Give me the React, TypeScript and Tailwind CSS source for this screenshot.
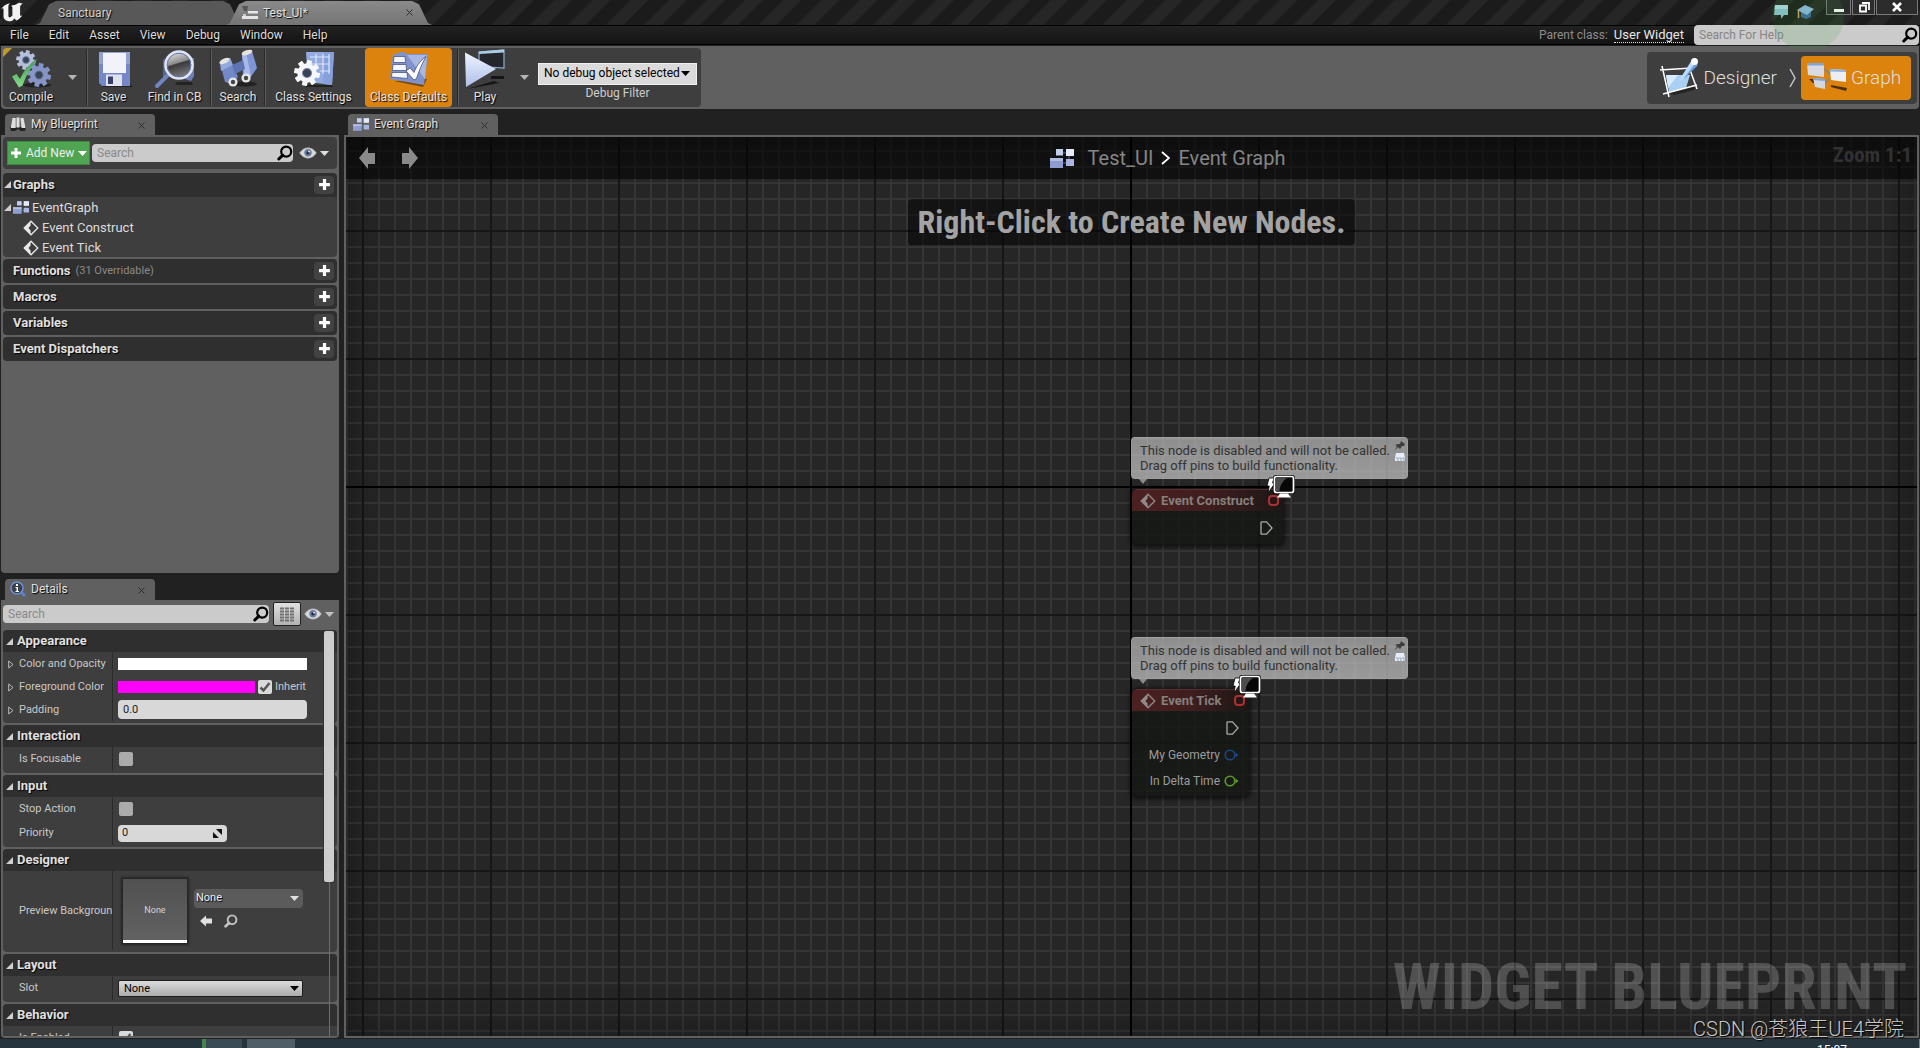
import React from "react";

const shadow = "[text-shadow:1px_1px_1px_#000]";

function UnrealLogo() {
  return (
    <svg viewBox="0 0 24 20" className="mt-[2px] h-5 w-6 shrink-0" fill="#f2f2f2" aria-hidden="true">
      <path d="M.8 8C2.500 4.200 5.800 1.900 10.200 1.200 8.800 2.300 8.400 3.200 8.400 4.600V14c0 1.500 1.400 1.700 2.300 1l1.700-1.400V5.400c0-1-.6-1.400-1.600-1.500C13 3 15.600 3 17.600 1.500L19 .8c2 .4 3 .8 4 .5-1.700 1.200-2.900 2.200-2.900 4v7.500c0 1.400 1 1.200 2.400.5-1.700 2.600-4 4.300-6.100 5.200l-1.900-1.900-2.600 2.500c-3.300.5-8.100-.5-8.400-4.600V7c0-1.300-1.200-.9-2.700 1Z" />
    </svg>
  );
}

function Down({ color = "#e0e0e0", w = 9 }: { color?: string; w?: number }) {
  return (
    <svg width={w} height="5" viewBox="0 0 9 5" className="shrink-0" aria-hidden="true">
      <path d="M0 0h9L4.500 5Z" fill={color} />
    </svg>
  );
}

function Magnifier({ className, color = "#000" }: { className: string; color?: string }) {
  return (
    <svg viewBox="0 0 16 16" className={className} fill="none" stroke={color} aria-hidden="true">
      <circle cx="9.200" cy="6.600" r="5" strokeWidth="2.200" />
      <path d="M5.800 10.200 1.800 14" strokeWidth="3" strokeLinecap="round" />
    </svg>
  );
}

function Eye() {
  return (
    <svg viewBox="0 0 18 12" className="h-3 w-[18px] shrink-0" aria-hidden="true">
      <path d="M.5 6C3.500 2 6 .8 9 .8S14.500 2 17.500 6C14.500 10 12 11.200 9 11.200S3.500 10 .5 6Z" fill="#d9d9d9" stroke="#8d8d8d" strokeWidth=".6" />
      <circle cx="9" cy="5.800" r="3.700" fill="#6b7fa0" />
      <circle cx="9" cy="5.800" r="1.700" fill="#1f2a40" />
      <circle cx="10" cy="4.600" r=".9" fill="#fff" />
    </svg>
  );
}

function GraphIcon({ className }: { className: string }) {
  return (
    <svg viewBox="0 0 24 19" className={className} aria-hidden="true">
      <path d="M9 4h8M19 5v9M9 14h8" stroke="#5f6a8c" strokeWidth="1" />
      <rect x="6" y="0" width="7" height="6.500" fill="#c5cdec" />
      <rect x="16" y="0" width="8" height="7" fill="#e6ebfa" />
      <rect x="0" y="9" width="13" height="10" fill="#8e9cd0" />
      <rect x="0" y="9" width="13" height="3" fill="#b1bce2" />
      <rect x="16" y="10" width="8" height="7" fill="#a9b6e0" />
    </svg>
  );
}

function Gear({ cx, cy, s, fill }: { cx: number; cy: number; s: number; fill: string }) {
  return (
    <g transform={`translate(${cx} ${cy}) scale(${s})`}>
      {[0, 45, 90, 135].map((a) => (
        <rect key={a} x="-2.400" y="-12" width="4.800" height="24" rx=".6" fill={fill} transform={`rotate(${a + 12})`} />
      ))}
      <circle r="6.500" fill="none" stroke={fill} strokeWidth="5" />
      <circle r="4.200" fill="#3a4258" stroke="#7c89ad" strokeWidth="1" />
    </g>
  );
}

function CompileIcon() {
  return (
    <svg viewBox="0 0 40 40" className="h-10 w-10" aria-hidden="true">
      <defs>
        <linearGradient id="chk" x1="0" y1="0" x2="0" y2="1"><stop offset="0" stopColor="#3c9a4c" /><stop offset="1" stopColor="#86dc8c" /></linearGradient>
      </defs>
      <ellipse cx="26" cy="36" rx="14" ry="2.500" fill="#222" />
      <Gear cx={15} cy={11} s={0.82} fill="#b4bfdc" />
      <Gear cx={28} cy={26} s={1} fill="#8595c8" />
      <path d="M1 27.500 5.500 25l3.500 5C13 21.500 18 15 26.500 9.500 19.500 18.500 15 27 11.500 36.500L8 38.500Z" fill="url(#chk)" />
    </svg>
  );
}

function SaveIcon() {
  return (
    <svg viewBox="0 0 40 40" className="h-10 w-10" aria-hidden="true">
      <path d="M6 35h30l3 3H9Z" fill="#222" />
      <path d="M5 3h31v34H8l-3-3Z" fill="#7688c8" />
      <path d="M5 3h31v12H5Z" fill="#93a2d6" />
      <path d="M9 4h23v20H9Z" fill="#f1f3f8" />
      <path d="M12 25.500h16V37H12Z" fill="#dfe3ee" />
      <path d="M14 27.500h5V35h-5Z" fill="#35406c" />
    </svg>
  );
}

function FindIcon() {
  return (
    <svg viewBox="0 0 40 40" className="h-10 w-10" aria-hidden="true">
      <defs>
        <linearGradient id="lens" x1="0" y1="0" x2=".3" y2="1"><stop offset="0" stopColor="#f4f4f4" /><stop offset=".5" stopColor="#8c8c8c" /><stop offset=".55" stopColor="#3a3a3a" /><stop offset="1" stopColor="#777" /></linearGradient>
      </defs>
      <path d="M8 10h7v18H8Z" fill="#54659b" />
      <path d="M33 9h6v18l-3 5-6-2Z" fill="#6d7fb5" />
      <path d="M22 33h15l1 3H20Z" fill="#222" />
      <path d="M12 27 2 37" stroke="#7085be" strokeWidth="4" strokeLinecap="round" />
      <circle cx="24" cy="16" r="13.500" fill="url(#lens)" stroke="#dfe5f5" strokeWidth="2.600" />
      <circle cx="24" cy="16" r="11.800" fill="none" stroke="#6678ad" strokeWidth="1" />
    </svg>
  );
}

function BinocularsIcon() {
  return (
    <svg viewBox="0 0 40 40" className="h-10 w-10" aria-hidden="true">
      <ellipse cx="27" cy="35" rx="12" ry="2.500" fill="#222" />
      <path d="m2 14 10-5 8 19-6 7-7-2Z" fill="#7188c9" />
      <path d="m2 14 10-5 3 7-12 6Z" fill="#93a8dd" />
      <path d="M24 5 34 2l5 17-7 10-7 1Z" fill="#7f96d6" />
      <path d="m24 5 4-2 5 24-6 3Z" fill="#a9bae8" />
      <path d="M14 16 25 11l2 9-10 5Z" fill="#5d73b2" />
      <ellipse cx="6.500" cy="12" rx="5.500" ry="2.400" transform="rotate(-24 6.500 12)" fill="#e3e3e0" />
      <ellipse cx="29" cy="3.500" rx="5.500" ry="2.400" transform="rotate(-18 29 3.500)" fill="#e8e4d8" />
      <circle cx="15" cy="33" r="4.600" fill="#e6e6e6" /><circle cx="15" cy="33" r="2.200" fill="#444" />
      <circle cx="28" cy="29" r="4.600" fill="#e6e6e6" /><circle cx="28" cy="29" r="2.200" fill="#444" />
    </svg>
  );
}

function SettingsIcon() {
  return (
    <svg viewBox="0 0 40 40" className="h-10 w-10" aria-hidden="true">
      <path d="M12 36h26l1 2H12Z" fill="#222" />
      <path d="M12 3h28l-2 33-24-3Z" fill="#93abe0" />
      <path d="M30 3h10l-2 33-9-1Z" fill="#86a0da" />
      <path d="M16 8h20M16 15h20M26 22h10M22 5v10M29 5v20M35 5v20" stroke="#dbe5fb" strokeWidth="1.200" fill="none" />
      <Gear cx={13} cy={24} s={1.08} fill="#f6f7fa" />
    </svg>
  );
}

function DefaultsIcon() {
  return (
    <svg viewBox="0 0 40 40" className="h-10 w-10" aria-hidden="true">
      <path d="M5 32 34 38l4-8Z" fill="#7a4a08" />
      <path d="M4 5h5l1-2h6l1 2h22l-4 31L1 30Z" fill="#7f92cc" />
      <path d="M18 6h20L36 30Z" fill="#a9b7e2" />
      <path d="M5 7.500h11l.6 6H4.500ZM4 15.500h13l.6 6H3.500ZM3 23.500h15l.6 6L2.500 28Z" fill="#f4f6fb" stroke="#3c4a76" strokeWidth=".7" />
      <path d="m17 22 4-3 4 4.500C27.500 17 31 12 37 7.500 33 14.500 30 22 27.500 29.500L25 31Z" fill="#fff" stroke="#33406a" strokeWidth=".7" />
    </svg>
  );
}

function PlayIcon() {
  return (
    <svg viewBox="0 0 40 40" className="h-10 w-10" aria-hidden="true">
      <defs>
        <linearGradient id="play" x1="0" y1="0" x2="0" y2="1"><stop offset="0" stopColor="#eef4ff" /><stop offset="1" stopColor="#aebfe8" /></linearGradient>
      </defs>
      <path d="m2 40 32-6-5-2ZM26 27h13v3H26Z" fill="#151515" />
      <path d="M14 3 39 1v18l-15-1-10-6Z" fill="#23262c" stroke="#8fb0cf" strokeWidth="1.200" />
      <path d="M14 2.500 39 .5v3L14 5Z" fill="#a9cbe6" />
      <path d="M0 3.500 31 20 1 38Z" fill="url(#play)" />
    </svg>
  );
}

function DesignerIcon() {
  return (
    <svg viewBox="0 0 42 40" className="h-10 w-[42px] shrink-0" aria-hidden="true">
      <path d="m9 34 30-7-3 5-20 5Z" fill="#242424" />
      <path d="M8 17h24l-4 13-17 4Z" fill="#a9cff3" />
      <path d="M8 17h12L10 30Z" fill="#d8ecff" />
      <path d="M2 12 34 10M4 8l7 31M31 9l8 22M5 36l34-9" stroke="#fff" strokeWidth="1.500" fill="none" />
      <path d="M22 22 33 3.500l7 3.500L27 20Z" fill="#6c9fe0" />
      <path d="m33 3.500 4 2-12 16-4 1Z" fill="#bcdcff" />
      <circle cx="36.500" cy="3.500" r="3.500" fill="#fff" />
    </svg>
  );
}

function ModeGraphIcon() {
  return (
    <svg viewBox="0 0 40 32" className="h-8 w-10 shrink-0" aria-hidden="true">
      <path d="M2 17h5l2 4H6ZM24 23l16 3-1 3-15-4Z" fill="#4d2f06" />
      <path d="m16 6 8 7M22 17l-5 5" stroke="#7d8394" strokeWidth="1.500" />
      <path d="M0 1h17v14L1 13Z" fill="#d7dae2" /><path d="M0 1h17v2.500H0Z" fill="#7fa5da" />
      <path d="m23 7 16 1v12l-15-2Z" fill="#eceef3" /><path d="m23 7 16 1v2L23 9.500Z" fill="#8fb2e0" />
      <path d="m6 16 12 1v10L8 25Z" fill="#d3d7e0" /><path d="m6 16 12 1v2L6 18Z" fill="#7fa5da" />
    </svg>
  );
}

function ToolButton({ label, icon, className = "" }: { label: string; icon: React.ReactNode; className?: string }) {
  return (
    <button className={`flex flex-col items-center pt-px text-xs leading-4 text-[#e2e2e2] ${shadow} ${className}`}>
      {icon}
      <span className="whitespace-nowrap">{label}</span>
    </button>
  );
}

const Separator = () => <div className="my-px w-[2px] shrink-0 border-l border-[#2a2a2a] bg-[#5e5e5e]" />;

function TitleBar() {
  return (
    <header className="flex h-[25px] shrink-0 bg-[repeating-linear-gradient(135deg,#1b1b1b_0px,#1b1b1b_13px,#262626_15px,#262626_26px,#1b1b1b_27px)]">
      <div className="flex w-9"><UnrealLogo /></div>
      <button className={`mt-px -mr-[14px] w-[207px] bg-[#585858] pb-px pl-[22px] text-left text-xs text-[#d0d0d0] [clip-path:polygon(0_100%,4px_92%,13px_14%,20px_0,calc(100%-20px)_0,calc(100%-13px)_14%,calc(100%-4px)_92%,100%_100%)] ${shadow}`}>Sanctuary</button>
      <div className={`relative z-10 mt-px -ml-[3px] flex w-[206px] items-center bg-linear-to-b from-[#8a8a8a] to-[#757575] pb-px pl-4 text-xs text-[#e0e0e0] [clip-path:polygon(0_100%,4px_92%,13px_14%,20px_0,calc(100%-20px)_0,calc(100%-13px)_14%,calc(100%-4px)_92%,100%_100%)] ${shadow}`}>
        <svg viewBox="0 0 16 14" className="mr-[5px] h-[14px] w-4" aria-hidden="true">
          <path d="M0 0h6l-1 5H2Z" fill="#555" /><path d="M6 5h10v2.500H6ZM0 10h16v3H0Z" fill="#e6e6e6" /><path d="M1 8h3v2H1Z" fill="#c9c9c9" />
        </svg>
        <span>Test_UI*</span>
        <button aria-label="Close Test_UI" className="mr-[19px] ml-auto"><CloseX /></button>
      </div>
      <div className="mr-px ml-auto flex">
        <svg viewBox="0 0 16 16" className="mt-1 h-4 w-4" aria-hidden="true"><path d="M2 1h13v10h-4l-3 4v-4H1Z" fill="#8cc7d6" /><path d="M2 1h13v4H1.600Z" fill="#b4dfe8" /></svg>
        <svg viewBox="0 0 17 16" className="mt-1 mr-3 ml-2 h-4 w-[17px]" aria-hidden="true"><path d="M4 8h10v5l-5 2-5-2Z" fill="#3f6aa0" /><path d="M0 6 8 1l9 4-7 6Z" fill="#8fbbe8" /><path d="M1.500 6v8" stroke="#d9a566" strokeWidth="1.500" /></svg>
        <WinButton label="Minimize" width="w-[25px]"><path d="M1 8h10v3H1Z" fill="#fff" /></WinButton>
        <WinButton label="Restore" width="w-[23px]"><path d="M4 2h7v7M2 4.500h6v6H2Z" fill="none" stroke="#fff" strokeWidth="1.800" /></WinButton>
        <WinButton label="Close" width="w-[42px]"><path d="m2 2 8 8M10 2l-8 8" stroke="#fff" strokeWidth="2.600" /></WinButton>
      </div>
    </header>
  );
}

function WinButton({ label, width, children }: { label: string; width: string; children: React.ReactNode }) {
  return (
    <button aria-label={label} className={`mr-px flex h-[15px] items-center justify-center border border-t-0 border-[#7a7a7a] bg-[#2c2c2c] ${width}`}>
      <svg viewBox="0 0 12 12" className="h-3 w-3">{children}</svg>
    </button>
  );
}

function CloseX() {
  return (
    <svg viewBox="0 0 7 7" className="h-[7px] w-[7px]" stroke="#2c2c2c" strokeWidth="1" aria-hidden="true"><path d="m.5.5 6 6M6.500.5l-6 6" /></svg>
  );
}

function MenuBar() {
  return (
    <nav className="flex h-5 shrink-0 items-stretch border-y border-black bg-linear-to-b from-[#222] to-[#141414] text-xs text-[#dcdcdc]">
      <div className="flex items-center gap-5 pl-[10px]">
        {["File", "Edit", "Asset", "View", "Debug", "Window", "Help"].map((m) => (
          <button key={m} className={shadow}>{m}</button>
        ))}
      </div>
      <div className="ml-auto flex items-center">
        <span className="text-[#8c8c8c]">Parent class:</span>
        <a href="#user-widget" className="mr-[10px] ml-[6px] border-b border-dotted border-[#ddd] text-[13px] leading-[15px] text-[#e8e8e8]">User Widget</a>
        <label className="mr-px flex h-5 w-[225px] items-center rounded-sm bg-[#cbcbcb] pl-[5px]">
          <input aria-label="Search For Help" placeholder="Search For Help" className="min-w-0 flex-1 outline-none placeholder:text-[#858585]" />
          <Magnifier className="mr-px h-4 w-4" />
        </label>
      </div>
    </nav>
  );
}

function Toolbar() {
  return (
    <div className="mx-px mt-px flex h-[63px] shrink-0 items-stretch justify-between rounded-b bg-[#606060] py-[2px] pl-[2px]">
      <div className="flex rounded bg-[#3e3e3e] bg-linear-[135deg,#c19a2e_6px,transparent_7px]">
        <ToolButton label="Compile" icon={<CompileIcon />} className="w-[56px]" />
        <button aria-label="Compile options" className="flex w-[27px] items-center justify-center"><Down color="#b5b5b5" /></button>
        <Separator />
        <ToolButton label="Save" icon={<SaveIcon />} className="w-[51px]" />
        <ToolButton label="Find in CB" icon={<FindIcon />} className="w-[71px]" />
        <Separator />
        <ToolButton label="Search" icon={<BinocularsIcon />} className="w-[52px]" />
        <Separator />
        <ToolButton label="Class Settings" icon={<SettingsIcon />} className="mr-1 w-[95px]" />
        <ToolButton label="Class Defaults" icon={<DefaultsIcon />} className="mr-[5px] w-[87px] rounded-sm bg-[#db830c]" />
        <Separator />
        <ToolButton label="Play" icon={<PlayIcon />} className="w-[52px]" />
        <button aria-label="Play options" className="flex w-[27px] items-center justify-center"><Down color="#b5b5b5" /></button>
        <div className="mr-1 flex flex-col items-center pt-[15px]">
          <div className="relative">
            <select aria-label="Debug Filter" className="block h-[22px] w-[159px] appearance-none border border-[#efefef] bg-[#dadada] pb-[2px] pl-[5px] text-xs text-black">
              <option>No debug object selected</option>
            </select>
            <div className="pointer-events-none absolute top-2 right-[7px]"><Down color="#000" /></div>
          </div>
          <span className="text-xs leading-4 text-[#cdcdcd]">Debug Filter</span>
        </div>
      </div>
      <div className="mt-1 mr-[2px] mb-[3px] flex items-center rounded bg-[#3e3e3e] pr-[6px] pl-[11px] text-[19px] font-light text-[#dedede]">
        <button className="flex items-center gap-1"><DesignerIcon />Designer</button>
        <svg viewBox="0 0 8 20" className="mr-1 ml-3 h-5 w-2" fill="none" stroke="#c4c4c4" strokeWidth="1.500" aria-hidden="true"><path d="m1 1 5 9-5 9" /></svg>
        <button className="flex h-11 w-[110px] items-center gap-1 rounded-sm bg-[#db830c] pl-[6px]"><ModeGraphIcon />Graph</button>
      </div>
    </div>
  );
}

function PanelTab({ icon, title }: { icon: React.ReactNode; title: string }) {
  return (
    <div className={`flex h-[21px] w-[150px] shrink-0 items-center gap-[5px] rounded-t bg-[#606060] pr-[10px] pb-px pl-[5px] text-xs text-[#e0e0e0] ${shadow}`}>
      {icon}
      <span>{title}</span>
      <button aria-label={`Close ${title}`} className="mt-[2px] ml-auto"><CloseX /></button>
    </div>
  );
}

const Expand = ({ className = "" }: { className?: string }) => (
  <svg viewBox="0 0 7 7" className={`h-[7px] w-[7px] shrink-0 ${className}`} aria-hidden="true"><path d="M7 0v7H0Z" fill="#cfcfcf" /></svg>
);

function PlusIcon({ className }: { className: string }) {
  return <svg viewBox="0 0 12 12" className={className} aria-hidden="true"><path d="M4.500 1h3v3.500H11v3H7.500V11h-3V7.500H1v-3h3.500Z" fill="#fff" /></svg>;
}

function EventIcon({ className, color = "#e8e8e8" }: { className: string; color?: string }) {
  return (
    <svg viewBox="0 0 16 16" className={className} aria-hidden="true">
      <path d="M8 1.200 14.800 8 8 14.800 1.200 8Z" fill="none" stroke={color} strokeWidth="1.300" />
      <path d="M7.600 1.500v4L5.500 8l2.100 2.500v4L1.200 8Z" fill={color} />
    </svg>
  );
}

function BlueprintSection({ title, note, open, children }: { title: string; note?: string; open?: boolean; children?: React.ReactNode }) {
  return (
    <section className="overflow-hidden rounded">
      <div className={`flex h-6 items-center bg-[#2f2f2f] pr-[3px] pb-px text-[13px] ${open ? "pl-px" : "pl-[10px]"}`}>
        {open && <Expand className="mr-[2px]" />}
        <h3 className={`font-bold text-[#e0e0e0] ${shadow}`}>{title}</h3>
        {note && <span className="mt-[2px] ml-[5px] text-[11px] text-[#8a8a8a]">{note}</span>}
        <button aria-label={`Add to ${title}`} className="ml-auto flex h-[18px] w-5 items-center justify-center rounded-sm bg-[#424242]"><PlusIcon className="h-[13px] w-[13px]" /></button>
      </div>
      {children}
    </section>
  );
}

function MyBlueprint() {
  return (
    <div className="flex h-[438px] shrink-0 flex-col gap-[2px] rounded-b bg-[#606060] p-[2px]">
      <div className="mb-[2px] flex h-8 items-center rounded bg-[#3e3e3e] pl-1">
        <button className="flex h-6 w-[83px] items-center gap-1 border border-[#3d8a3d] bg-[#4fa552] pl-[2px] text-xs whitespace-nowrap text-[#eee]"><PlusIcon className="h-3 w-3" />Add New<Down color="#fff" /></button>
        <label className="ml-[2px] flex h-[18px] w-[201px] items-center rounded-sm bg-[#cbcbcb] pl-[5px]">
          <input aria-label="Search blueprint" placeholder="Search" className="min-w-0 flex-1 text-xs outline-none placeholder:text-[#8a8a8a]" />
          <Magnifier className="h-4 w-4" />
        </label>
        <button aria-label="View options" className="ml-[6px] flex items-center gap-[3px]"><Eye /><Down /></button>
      </div>
      <BlueprintSection title="Graphs" open>
        <ul className="bg-[#3e3e3e] text-[13px] leading-[19px] text-[#dcdcdc]">
          <li className="flex h-5 items-center pt-px pl-px"><Expand className="mr-[2px]" /><GraphIcon className="mr-[3px] h-[13px] w-4" />EventGraph</li>
          <li className="flex h-5 items-center pt-px pl-5"><EventIcon className="mr-[3px] h-4 w-4" />Event Construct</li>
          <li className="flex h-5 items-center pt-px pl-5"><EventIcon className="mr-[3px] h-4 w-4" />Event Tick</li>
        </ul>
      </BlueprintSection>
      <BlueprintSection title="Functions" note="(31 Overridable)" />
      <BlueprintSection title="Macros" />
      <BlueprintSection title="Variables" />
      <BlueprintSection title="Event Dispatchers" />
    </div>
  );
}

function Category({ title, children }: { title: string; children: React.ReactNode }) {
  return (
    <section className="shrink-0 overflow-hidden rounded bg-[#3e3e3e] pb-[2px]">
      <h3 className={`flex h-[22px] items-center gap-1 bg-[#2f2f2f] pl-[3px] text-[13px] font-bold text-[#e0e0e0] ${shadow}`}><Expand />{title}</h3>
      {children}
    </section>
  );
}

function Row({ label, id, arrow, h = "h-6", children }: { label: string; id?: string; arrow?: boolean; h?: string; children: React.ReactNode }) {
  return (
    <div className={`flex ${h}`}>
      <div className="flex w-[110px] shrink-0 items-center overflow-hidden border-r border-[#2b2b2b] pt-px pl-[5px]">
        <svg viewBox="0 0 6 9" className="mr-[5px] h-[9px] w-[6px] shrink-0" fill="none" stroke="#b8b8b8" aria-hidden="true">{arrow && <path d="M.7 1v7L5 4.500Z" />}</svg>
        <label htmlFor={id} className="text-[11px] whitespace-nowrap text-[#c8c8c8]">{label}</label>
      </div>
      <div className="flex min-w-0 flex-1 items-center pl-[5px]">{children}</div>
    </div>
  );
}

function Check({ id, checked = false }: { id: string; checked?: boolean }) {
  return (
    <span className="relative flex h-[14px] w-[14px] shrink-0">
      <input id={id} type="checkbox" defaultChecked={checked} className="h-[14px] w-[14px] appearance-none rounded-xs bg-[#ababab] checked:bg-[#dadada]" />
      {checked && <svg viewBox="0 0 14 14" className="pointer-events-none absolute inset-0" fill="none" stroke="#555" strokeWidth="2.500"><path d="m2.500 7.500 3 3L11.500 3" /></svg>}
    </span>
  );
}

function Details() {
  return (
    <div className="flex min-h-0 flex-1 flex-col rounded-b bg-[#606060] p-[2px]">
      <div className="flex h-7 shrink-0 items-center pb-1">
        <label className="flex h-[18px] w-[266px] items-center rounded-sm bg-[#cbcbcb] pl-[5px]">
          <input aria-label="Search details" placeholder="Search" className="min-w-0 flex-1 text-xs outline-none placeholder:text-[#8a8a8a]" />
          <Magnifier className="h-4 w-4" />
        </label>
        <button aria-label="Property matrix" className="mr-[3px] ml-1 flex h-6 w-7 items-center justify-center rounded-xs border border-[#222] bg-linear-to-b from-[#e0e0e0] to-[#b2b2b2]">
          <svg viewBox="0 0 14 15" className="h-[15px] w-[14px]" stroke="#707070" strokeWidth="1.800"><path d="M0 1.500h14M0 4.500h14M0 7.500h14M0 10.500h14M0 13.500h14" strokeDasharray="4 1" /></svg>
        </button>
        <button aria-label="Details view options" className="flex items-center gap-[3px]"><Eye /><Down color="#c2c2c2" /></button>
      </div>
      <div className="relative flex min-h-0 flex-1 flex-col gap-[2px] overflow-hidden">
        <Category title="Appearance">
          <Row label="Color and Opacity" arrow><button aria-label="Color and Opacity" className="h-3 w-[189px] bg-white" /></Row>
          <Row label="Foreground Color" arrow h="h-[22px]">
            <button aria-label="Foreground Color" className="mr-[3px] h-3 w-[137px] bg-[#ff00ff]" />
            <Check id="inherit" checked /><label htmlFor="inherit" className="ml-[3px] text-[11px] text-[#c8c8c8]">Inherit</label>
          </Row>
          <Row label="Padding" id="padding" arrow h="h-[23px]"><input id="padding" defaultValue="0.0" className="h-[19px] w-[189px] rounded bg-[#d8d8d8] pl-[5px] text-[11px] text-[#222]" /></Row>
        </Category>
        <Category title="Interaction"><Row label="Is Focusable" id="focus"><div className="pl-px"><Check id="focus" /></div></Row></Category>
        <Category title="Input">
          <Row label="Stop Action" id="stop"><div className="pl-px"><Check id="stop" /></div></Row>
          <Row label="Priority" id="priority">
            <label className="flex h-[17px] w-[109px] items-center rounded bg-[#d8d8d8] pr-[5px] pl-1">
              <input id="priority" defaultValue="0" className="min-w-0 flex-1 text-[11px] text-[#222] outline-none" />
              <svg viewBox="0 0 9 9" className="h-[9px] w-[9px]"><path d="M3 0h6v6ZM0 3v6h6Z" fill="#111" /></svg>
            </label>
          </Row>
        </Category>
        <Category title="Designer">
          <Row label="Preview Background" id="asset" h="h-[79px]">
            <div className="ml-[5px] flex h-16 w-16 items-center justify-center border-b-[3px] border-white bg-linear-to-b from-[#505050] to-[#626262] pt-[3px] text-[9px] text-[#d5d5d5] shadow-[0_0_2px_2px_#252525]">None</div>
            <div className="ml-[7px] flex flex-col">
              <div className="relative">
                <select id="asset" className={`block h-[19px] w-[109px] appearance-none rounded bg-[#5b5b5b] pb-px pl-[2px] text-[11px] text-[#eee] ${shadow}`}><option>None</option></select>
                <div className="pointer-events-none absolute top-[7px] right-1"><Down /></div>
              </div>
              <div className="mt-[6px] mb-1 flex gap-3 pl-[6px]">
                <button aria-label="Use selected asset"><svg viewBox="0 0 12 11" className="h-3 w-3"><path d="M0 5.500 6 0v3h6v5H6v3Z" fill="#e0e0e0" /></svg></button>
                <button aria-label="Browse to asset"><Magnifier className="h-[14px] w-[14px]" color="#c4c4c4" /></button>
              </div>
            </div>
          </Row>
        </Category>
        <Category title="Layout">
          <Row label="Slot" id="slot">
            <div className="relative">
              <select id="slot" className="block h-[17px] w-[185px] appearance-none rounded-xs border border-[#1e1e1e] bg-linear-to-b from-[#dcdcdc] to-[#acacac] pl-[5px] text-[11px] text-black"><option>None</option></select>
              <div className="pointer-events-none absolute top-[6px] right-1"><Down color="#000" /></div>
            </div>
          </Row>
        </Category>
        <Category title="Behavior"><Row label="Is Enabled" id="enabled"><div className="pl-px"><Check id="enabled" checked /></div></Row></Category>
        <div className="absolute inset-y-0 right-[3px] flex w-[10px] flex-col items-center">
          <div className="mt-px h-[251px] w-[10px] rounded-xs bg-[#cdcdcd] shadow-[0_0_1px_1px_#333]" />
          <div className="w-px flex-1 bg-[#6e6e6e]" />
        </div>
      </div>
    </div>
  );
}

const OutPin = () => (
  <svg viewBox="0 0 13 14" className="h-[14px] w-[13px]" fill="none" stroke="#a8a8a8" strokeWidth="1.300" aria-hidden="true"><path d="M1 1.500Q1 .8 1.700.8H6.500L12 7 6.500 13.200H1.700Q1 13.200 1 12.500Z" /></svg>
);

const DataPin = ({ color }: { color: string }) => (
  <svg viewBox="0 0 15 12" className="h-3 w-[15px] shrink-0" aria-hidden="true"><circle cx="6" cy="6" r="4.800" fill="none" stroke={color} strokeWidth="1.600" /><path d="M11.500 3.500 14.500 6l-3 2.500Z" fill={color} /></svg>
);

function GraphNode({ title, position, width, children }: { title: string; position: string; width: string; children?: React.ReactNode }) {
  return (
    <article className={`absolute left-[785px] w-[277px] ${position}`}>
      <div className="flex h-[42px] rounded border border-[#a9a9a9]/60 bg-[#c6c6c6]/65 bg-linear-to-b from-transparent to-white/10 pt-[5px] pl-2 text-[13px] leading-[15px] text-[#333]">
        <p className="whitespace-nowrap">This node is disabled and will not be called.<br />Drag off pins to build functionality.</p>
        <div className="mt-[-2px] mr-[2px] ml-auto flex flex-col items-center gap-[3px]">
          <svg viewBox="0 0 10 9" className="h-[9px] w-[10px]" aria-hidden="true"><path d="m6 0 4 3-1 2H7L5 8 3 6 0 9l2-4L0 4l3-1h2Z" fill="#3d3d3d" /></svg>
          <svg viewBox="0 0 10 9" className="h-[9px] w-[10px]" aria-hidden="true"><path d="M1 0h8l1 5v3H0V5Z" fill="#e8eef5" /><path d="M1 5h2v3M4 5h2v3M7 5h2v3" stroke="#8fa3bb" fill="none" /></svg>
        </div>
      </div>
      <svg viewBox="0 0 8 5" className="ml-2 h-[5px] w-2" aria-hidden="true"><path d="M0 0h8L4 5Z" fill="#8c8c8c" /></svg>
      <div className={`relative mt-[5px] ml-px rounded-md bg-[#141614]/80 shadow-[0_1px_4px_2px_rgba(0,0,0,0.6)] ${width}`}>
        <div className="flex h-[22px] items-center rounded-t-md border-t border-[#6b3a3a]/60 bg-linear-to-r from-[#4d2020] via-[#3f1e1e] to-[#1c1616] pl-2 text-[13px] font-bold text-[#86807d]">
          <EventIcon className="mr-[5px] h-4 w-4" color="#8f8a88" />{title}
          <span className="mr-1 ml-auto h-[11px] w-[11px] rounded-sm border-2 border-[#a83131] bg-[#2b1414]" />
        </div>
        <svg viewBox="0 0 30 26" className="absolute -top-[15px] -right-3 h-[26px] w-[30px]" aria-hidden="true">
          <path d="M4 4h5L7.500 9h2.500L3 19l1.200-7H2Z" fill="#fff" stroke="#000" strokeWidth=".8" />
          <rect x="8" y="1" width="22" height="19" rx="3" fill="#111" />
          <rect x="9.500" y="2.500" width="19" height="16" rx="2" fill="#070707" stroke="#fff" strokeWidth="1.700" />
          <path d="M11 17V4h11c-4 2.500-7 7-7.500 13Z" fill="#4c4c4c" />
          <path d="M15 19.500h8l3 4H12Z" fill="#fff" />
        </svg>
        {children}
      </div>
    </article>
  );
}

function EventGraph() {
  return (
    <section className="relative flex-1 overflow-hidden border-2 border-[#606060] bg-[#262626]">
      <div className="absolute inset-0 bg-[linear-gradient(to_right,#353535_2px,transparent_2px),linear-gradient(to_bottom,#353535_2px,transparent_2px)] bg-size-[16px_16px] bg-position-[0px_13px]" />
      <div className="absolute inset-0 bg-[linear-gradient(to_right,#161616_2px,transparent_2px),linear-gradient(to_bottom,#161616_2px,transparent_2px)] bg-size-[128px_128px] bg-position-[16px_93px]" />
      <div className="absolute inset-y-0 left-[784px] w-[2px] bg-black" />
      <div className="absolute inset-x-0 top-[349px] h-[2px] bg-black" />
      <div className="absolute inset-0 shadow-[inset_0_0_40px_4px_rgba(0,0,0,0.35)]" />
      <div className="relative flex h-[42px] items-center bg-black/55 text-xl text-[#868686]">
        <button aria-label="Back" className="ml-[13px]"><NavArrow /></button>
        <button aria-label="Forward" className="ml-[25px]"><NavArrow flip /></button>
        <div className="flex flex-1 items-center justify-center">
          <GraphIcon className="mr-[14px] h-[19px] w-6" />
          <span>Test_UI</span>
          <svg viewBox="0 0 9 14" className="mx-2 h-[14px] w-[9px]" fill="none" stroke="#fff" strokeWidth="1.800" aria-hidden="true"><path d="m1 1 7 6-7 6" /></svg>
          <span>Event Graph</span>
        </div>
        <div className="absolute top-1 right-[5px] font-['Roboto_Condensed',Roboto,sans-serif] text-[21px] leading-7 font-bold text-[#313131]">Zoom 1:1</div>
      </div>
      <div className="relative mt-5 flex justify-center">
        <p className="rounded bg-black/50 px-[10px] pt-px font-['Roboto_Condensed',Roboto,sans-serif] text-[32px] leading-[45px] font-bold text-[#a3a3a3]">Right-Click to Create New Nodes.</p>
      </div>
      <GraphNode title="Event Construct" position="top-[300px]" width="w-[151px]">
        <div className="flex h-[33px] justify-end pt-[10px] pr-[10px]"><OutPin /></div>
      </GraphNode>
      <GraphNode title="Event Tick" position="top-[500px]" width="w-[117px]">
        <div className="flex h-[31px] justify-end pt-[10px] pr-[10px]"><OutPin /></div>
        <div className="pr-[10px] pb-[2px] text-xs text-[#9c9c9c]">
          <div className="flex h-[26px] items-center justify-end gap-1">My Geometry<DataPin color="#1c4683" /></div>
          <div className="flex h-[26px] items-center justify-end gap-1">In Delta Time<DataPin color="#5c9a2a" /></div>
        </div>
      </GraphNode>
      <div className="pointer-events-none absolute right-[10px] bottom-3 font-['Roboto_Condensed',Roboto,sans-serif] text-[64px] leading-[72px] font-bold text-white/20">WIDGET BLUEPRINT</div>
    </section>
  );
}

function NavArrow({ flip }: { flip?: boolean }) {
  return (
    <svg viewBox="0 0 17 22" className={`h-[22px] w-[17px] ${flip ? "-scale-x-100" : ""}`} aria-hidden="true"><path d="M0 11 9 0v6h7v11H9v5Z" fill="#8a8a8a" /></svg>
  );
}

export default function App() {
  return (
    <div className="relative flex h-screen flex-col overflow-hidden bg-[#212121] font-[Roboto,sans-serif]">
      <TitleBar />
      <MenuBar />
      <Toolbar />
      <main className="mt-[5px] flex min-h-0 flex-1 gap-[5px] px-px">
        <aside className="flex w-[338px] shrink-0 flex-col">
          <div className="flex pl-1">
            <PanelTab title="My Blueprint" icon={<svg viewBox="0 0 16 14" className="h-[14px] w-4" aria-hidden="true"><path d="M0 10h16l-1 4h-4l-3-2-3 2H1Z" fill="#222" /><path d="M2.500 1h3.200v10H.8ZM6.500.5h3v10h-3ZM10.500 1h3l2 10h-4Z" fill="#dedede" /></svg>} />
          </div>
          <MyBlueprint />
          <div className="mt-[6px] flex pl-1">
            <PanelTab title="Details" icon={<svg viewBox="0 0 16 16" className="h-4 w-4" aria-hidden="true"><path d="m11 11 4 4" stroke="#5f7fc8" strokeWidth="3" /><circle cx="7" cy="7" r="6" fill="#3a3f4c" stroke="#6f90d8" strokeWidth="1.500" /><path d="M6 3h2v2H6ZM5.500 6H8v4h1v1H5.500v-1h1V7h-1Z" fill="#fff" /></svg>} />
          </div>
          <Details />
        </aside>
        <div className="flex min-w-0 flex-1 flex-col">
          <div className="flex pl-1"><PanelTab title="Event Graph" icon={<GraphIcon className="h-[13px] w-4" />} /></div>
          <EventGraph />
        </div>
      </main>
      <footer className="mt-px flex h-[9px] shrink-0 overflow-hidden border-r border-[#7b868c] bg-[#25343d] pl-[202px]">
        <span className="w-1 bg-[#47844c]" /><span className="w-9 bg-[#3b4b55]" /><span className="ml-[5px] w-12 bg-[#4f5e67]" />
        <span className="mt-[5px] mr-[72px] ml-auto text-xs leading-3 text-white">15:07</span>
      </footer>
      <div className="pointer-events-none absolute -top-4 right-[76px] z-20 h-[66px] w-[72px] rounded-full bg-[#3f9a3f]/15" />
      <div className={`pointer-events-none absolute right-4 bottom-[5px] font-[Roboto,'Noto_Sans_CJK_SC',sans-serif] text-xl leading-7 font-light text-[#c9c9c9] ${shadow}`}>CSDN @苍狼王UE4学院</div>
    </div>
  );
}
